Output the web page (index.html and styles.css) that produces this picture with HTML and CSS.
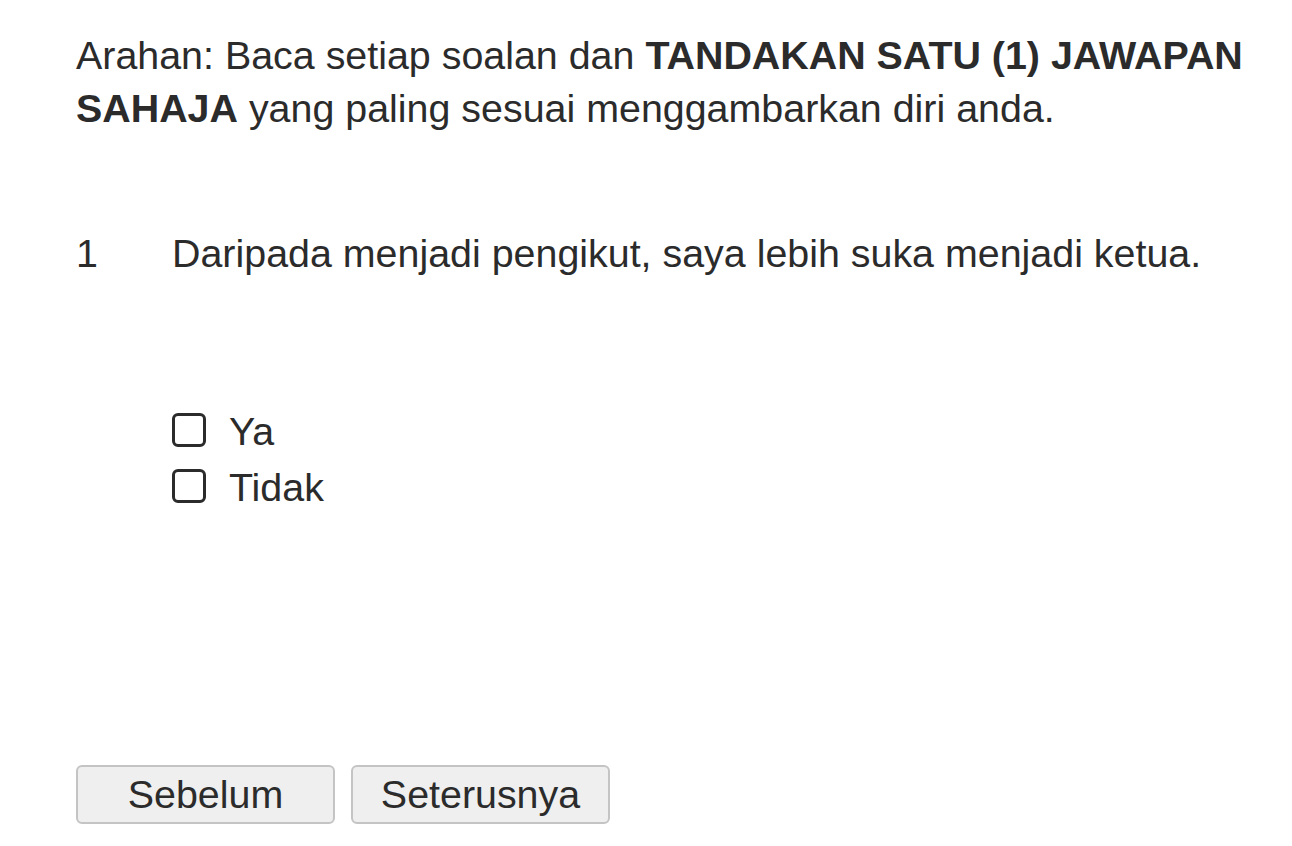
FILE: index.html
```html
<!DOCTYPE html>
<html>
<head>
<meta charset="utf-8">
<link rel="stylesheet" href="styles.css">
</head>
<body>
<div class="page">
  <p class="intro">Arahan: Baca setiap soalan dan <b>TANDAKAN SATU (1) JAWAPAN SAHAJA</b> yang paling sesuai menggambarkan diri anda.</p>
  <div class="question">
    <span class="num">1</span>
    <span class="qtext">Daripada menjadi pengikut, saya lebih suka menjadi ketua.</span>
  </div>
  <div class="options">
    <label class="option"><span class="box"></span><span>Ya</span></label>
    <label class="option"><span class="box"></span><span>Tidak</span></label>
  </div>
  <div class="nav">
    <button class="btn">Sebelum</button>
    <button class="btn">Seterusnya</button>
  </div>
</div>
</body>
</html>
```
FILE: styles.css
```css
html, body {
  margin: 0;
  padding: 0;
  background: #fff;
}
body {
  font-family: "Liberation Sans", Arial, sans-serif;
  font-size: 39.4px;
  color: #2b2b2b;
}
.page {
  padding: 29px 30px 0 76px;
}
.intro {
  margin: 0;
  line-height: 53px;
}
.intro b {
  font-weight: bold;
}
.question {
  display: flex;
  margin-top: 92px;
  line-height: 53px;
}
.num {
  width: 96px;
  flex: none;
}
.options {
  margin-top: 123px;
  padding-left: 96px;
  display: flex;
  flex-direction: column;
}
.option {
  display: flex;
  align-items: center;
  height: 56px;
  line-height: 56px;
}
.box {
  width: 28px;
  height: 28px;
  border: 3px solid #2b2b2b;
  border-radius: 6px;
  margin-right: 23px;
  margin-top: -2px;
  flex: none;
}
.nav {
  margin-top: 250px;
  display: flex;
  gap: 16px;
}
.btn {
  width: 259px;
  height: 59px;
  font-family: "Liberation Sans", Arial, sans-serif;
  font-size: 39.4px;
  color: #2b2b2b;
  background: #efefef;
  border: 2px solid #c4c4c4;
  border-radius: 6px;
  padding: 0;
}
```
